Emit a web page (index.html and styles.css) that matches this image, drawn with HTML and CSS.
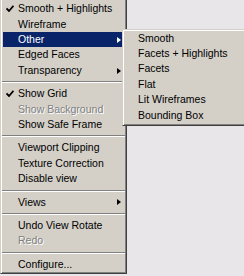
FILE: index.html
```html
<!DOCTYPE html>
<html>
	<head>
		<meta charset="UTF-8">
		<title>View menu</title>
		<link rel="stylesheet" href="styles.css">
	</head>
	<body>
		<div class="screen">
			<div class="menu main">
				<div class="item"><span class="mark"><svg width="8" height="7" viewBox="0 0 8 7"><path d="M0.5 3.5 L3 6 L7.5 0.8" fill="none" stroke="#000" stroke-width="1.8"/></svg></span>Smooth + Highlights</div>
				<div class="item"><span class="mark"></span>Wireframe</div>
				<div class="item active"><span class="mark"></span>Other<span class="arrow"></span></div>
				<div class="item"><span class="mark"></span>Edged Faces</div>
				<div class="item"><span class="mark"></span>Transparency<span class="arrow"></span></div>
				<div class="sep"></div>
				<div class="item"><span class="mark"><svg width="8" height="7" viewBox="0 0 8 7"><path d="M0.5 3.5 L3 6 L7.5 0.8" fill="none" stroke="#000" stroke-width="1.8"/></svg></span>Show Grid</div>
				<div class="item off"><span class="mark"></span>Show Background</div>
				<div class="item"><span class="mark"></span>Show Safe Frame</div>
				<div class="sep"></div>
				<div class="item"><span class="mark"></span>Viewport Clipping</div>
				<div class="item"><span class="mark"></span>Texture Correction</div>
				<div class="item"><span class="mark"></span>Disable view</div>
				<div class="sep"></div>
				<div class="item"><span class="mark"></span>Views<span class="arrow"></span></div>
				<div class="sep"></div>
				<div class="item"><span class="mark"></span>Undo View Rotate</div>
				<div class="item off"><span class="mark"></span>Redo</div>
				<div class="sep"></div>
				<div class="item"><span class="mark"></span>Configure...</div>
			</div>
			<div class="menu sub">
				<div class="item">Smooth</div>
				<div class="item">Facets + Highlights</div>
				<div class="item">Facets</div>
				<div class="item">Flat</div>
				<div class="item">Lit Wireframes</div>
				<div class="item">Bounding Box</div>
			</div>
		</div>
	</body>
</html>
```
FILE: styles.css
```css
*{
	margin: 0;
	padding: 0;
	box-sizing: border-box;
}
body{
	background: #e8e6e9;
	font-family: "Liberation Sans", Arial, sans-serif;
	font-size: 10.5px;
	color: #000;
	overflow: hidden;
}
.screen{
	width: 244px;
	height: 276px;
	position: relative;
	overflow: hidden;
}
.menu{
	background: #d4d0c8;
	border: 1px solid;
	border-color: #d4d0c8 #404040 #404040 #d4d0c8;
	box-shadow: inset 1px 1px #fff, inset -1px -1px #808080;
}
.main{
	width: 127px;
	border-top: none;
	padding: 1.3px 2px 1px 2px;
	box-shadow: inset 1px 0 #fff, inset -1px -1px #808080;
}
.item{
	height: 15.4px;
	line-height: 15.4px;
	display: flex;
	align-items: center;
	white-space: nowrap;
}
.mark{
	width: 15px;
	flex: none;
	display: flex;
	align-items: center;
	padding-left: 3px;
}
.mark svg{
	display: block;
	margin-top: -1px;
}
.arrow{
	margin-left: auto;
	margin-right: 3px;
	width: 0;
	height: 0;
	border-left: 4px solid #000;
	border-top: 3.5px solid transparent;
	border-bottom: 3.5px solid transparent;
}
.active{
	background: #0a246a;
	color: #fff;
}
.active .arrow{
	border-left-color: #fff;
}
.off{
	color: #808080;
	text-shadow: 1px 1px 0 #fff;
}
.sep{
	height: 8px;
	display: flex;
	align-items: center;
	margin: 0 -1px;
}
.sep::before{
	content: "";
	flex: 1;
	border-top: 1px solid #808080;
	border-bottom: 1px solid #fff;
}
.sub{
	position: absolute;
	left: 122px;
	top: 29px;
	width: 126px;
	padding: 0.6px 2px 2px 2px;
}
.sub .item{
	padding-left: 13px;
}
```
